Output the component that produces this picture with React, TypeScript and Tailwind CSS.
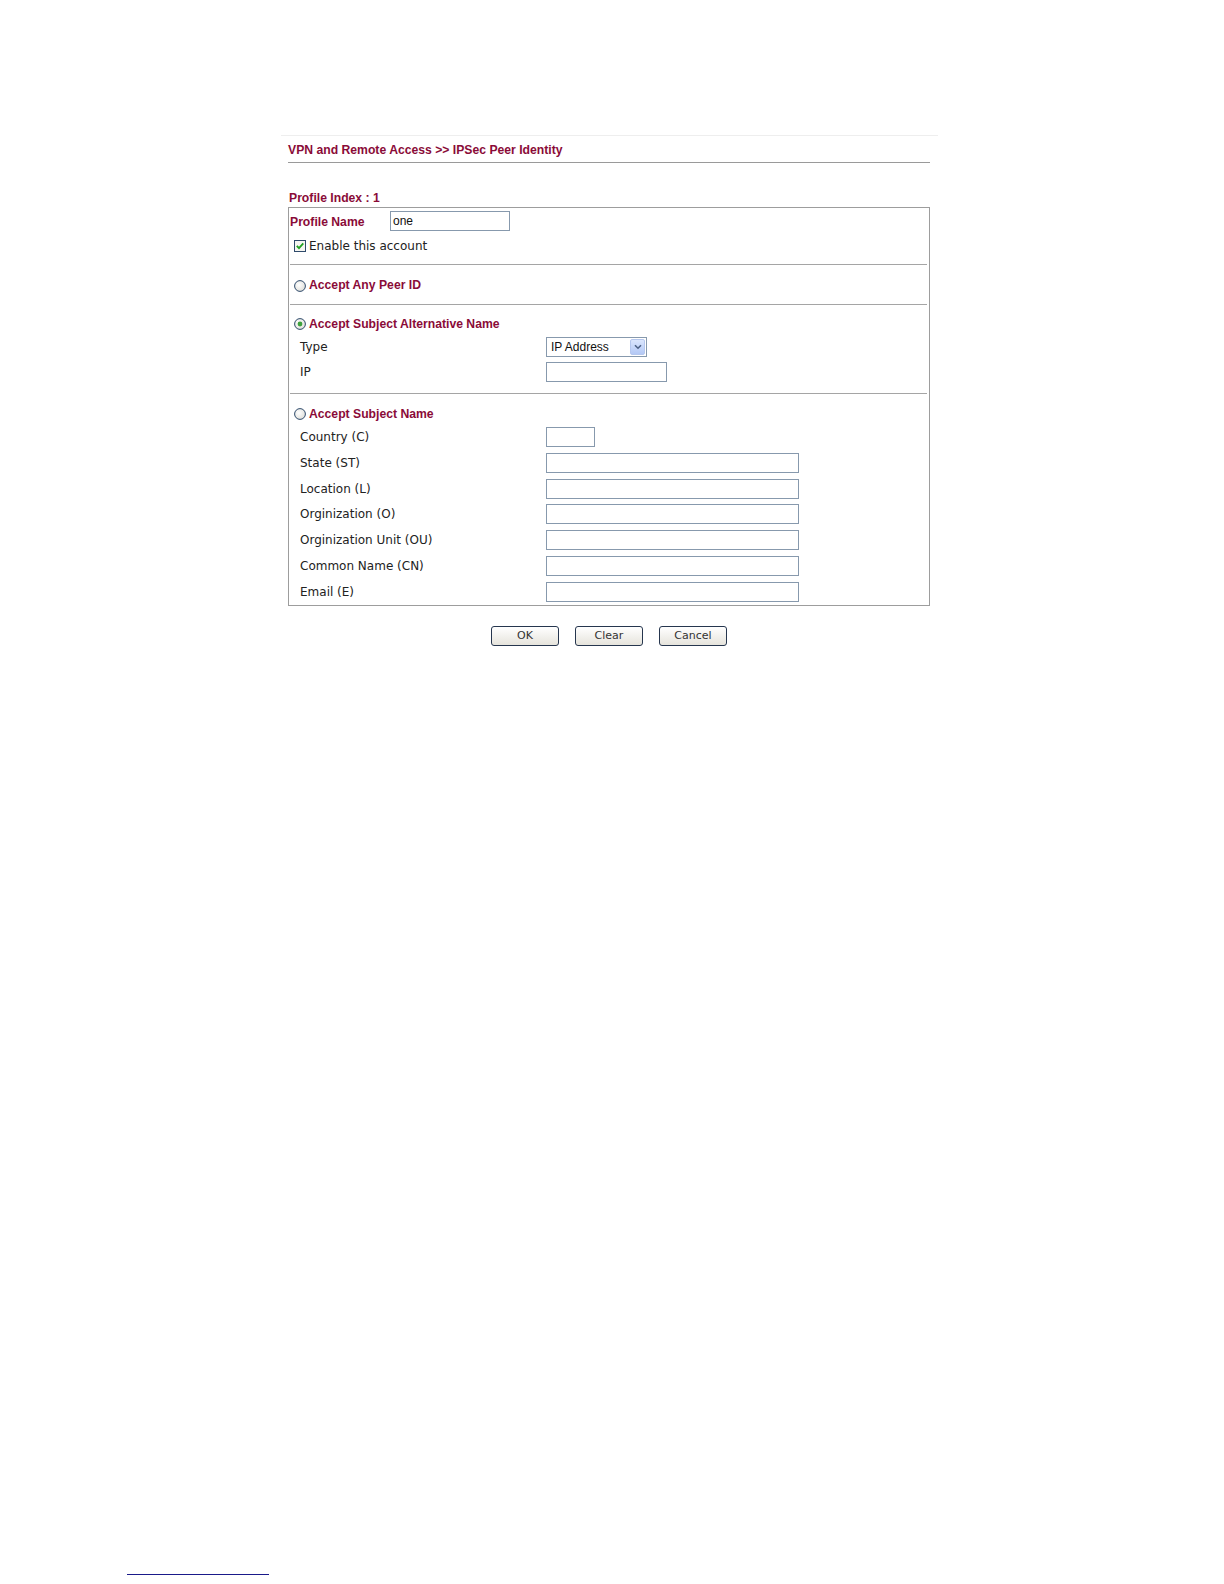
import React from "react";

const red = "text-[#8a0b38]";
const boldFont = "font-['Liberation_Sans',Arial,sans-serif] font-bold text-[12.2px]";
const regFont = "font-['DejaVu_Sans',Verdana,sans-serif] text-[12px] text-[#222]";
const arialFont = "font-['Liberation_Sans',Arial,sans-serif] text-[12px] text-[#111]";
const btnFont = "font-['DejaVu_Sans',Verdana,sans-serif] text-[11px] text-[#333]";

function Radio({ checked }: { checked?: boolean }) {
  return (
    <svg width="12" height="12" viewBox="0 0 12 12" className="shrink-0">
      <defs>
        <radialGradient id={checked ? "rg1" : "rg0"} cx="0.4" cy="0.4" r="0.7">
          <stop offset="0" stopColor="#ffffff" />
          <stop offset="1" stopColor="#dcdcd6" />
        </radialGradient>
      </defs>
      <circle cx="6" cy="6" r="5.4" fill={`url(#${checked ? "rg1" : "rg0"})`} stroke="#2f4a6b" strokeWidth="1" />
      {checked && <circle cx="6" cy="6" r="2.4" fill="#3da13d" />}
    </svg>
  );
}

function Checkbox() {
  return (
    <svg width="12" height="12" viewBox="0 0 12 12" className="shrink-0">
      <rect x="0.5" y="0.5" width="11" height="11" fill="#f6f6f2" stroke="#2f4a6b" />
      <path d="M2.8 5.8 L5 8.2 L9.3 3.3" fill="none" stroke="#21a121" strokeWidth="1.8" />
    </svg>
  );
}

function TextBox({ w, value }: { w: string; value?: string }) {
  return (
    <div className={`${w} h-[20px] border border-[#8799ad] bg-white flex items-center pl-[2px] ${arialFont}`}>
      {value}
    </div>
  );
}

function Row({ label, children, mt }: { label: string; children: React.ReactNode; mt: string }) {
  return (
    <div className={`flex items-center h-[20px] ${mt}`}>
      <div className={`w-[246px] whitespace-nowrap ${regFont}`}>{label}</div>
      {children}
    </div>
  );
}

function Btn({ label }: { label: string }) {
  return (
    <div
      className={`w-[68px] h-[20px] rounded-[3px] border border-[#26364e] bg-gradient-to-b from-white to-[#e6e4dc] flex items-center justify-center ${btnFont}`}
    >
      {label}
    </div>
  );
}

export default function App() {
  return (
    <div className="h-[1584px] w-full bg-white overflow-hidden">
      <div className="pt-[135px] pl-[281px]">
        <div className="w-[657px] h-px bg-[#eeeeee]" />
        <div className={`ml-[7px] w-[642px] h-[26px] pt-[2px] flex items-center ${boldFont} ${red}`}>
          VPN and Remote Access &gt;&gt; IPSec Peer Identity
        </div>
        <div className="ml-[7px] w-[642px] h-px bg-[#9a9a9a]" />
        <div className={`ml-[8px] mt-[25px] h-[19px] pt-[2px] flex items-center ${boldFont} ${red}`}>Profile Index : 1</div>

        <div className="ml-[7px] w-[642px] border border-[#9d9d9d]">
          {/* Section 1 */}
          <div className="pt-[3px] pb-[8px]">
            <div className="flex items-center h-[20px] pl-[1px]">
              <div className={`w-[100px] pt-[3px] ${boldFont} ${red}`}>Profile Name</div>
              <TextBox w="w-[120px]" value="one" />
            </div>
            <div className="flex items-center h-[20px] mt-[5px] pl-[5px] gap-[3px]">
              <Checkbox />
              <span className={regFont}>Enable this account</span>
            </div>
          </div>
          <div className="ml-[1px] mr-[2px] h-px bg-[#a5a5a5]" />

          {/* Section 2 */}
          <div className="h-[39px] pt-[2px] flex items-center pl-[5px] gap-[3px]">
            <Radio />
            <span className={`${boldFont} ${red}`}>Accept Any Peer ID</span>
          </div>
          <div className="ml-[1px] mr-[2px] h-px bg-[#a5a5a5]" />

          {/* Section 3 */}
          <div className="pt-[10px] pb-[11px]">
            <div className="h-[18px] flex items-center pl-[5px] gap-[3px]">
              <Radio checked />
              <span className={`${boldFont} ${red}`}>Accept Subject Alternative Name</span>
            </div>
            <div className="pl-[11px]">
              <Row label="Type" mt="mt-[4px]">
                <div className="w-[101px] h-[20px] border border-[#8799ad] bg-white flex items-center justify-between pl-[4px] pr-[1px]">
                  <span className={arialFont}>IP Address</span>
                  <div className="w-[15px] h-[16px] bg-gradient-to-b from-[#dbe6fd] to-[#b3c8f5] border border-[#b5c7ee] rounded-[2px] flex items-center justify-center">
                    <svg width="8" height="6" viewBox="0 0 8 6">
                      <path d="M1 1.2 L4 4.2 L7 1.2" fill="none" stroke="#4d6185" strokeWidth="1.6" />
                    </svg>
                  </div>
                </div>
              </Row>
              <Row label="IP" mt="mt-[5px]">
                <TextBox w="w-[121px]" />
              </Row>
            </div>
          </div>
          <div className="ml-[1px] mr-[2px] h-px bg-[#a5a5a5]" />

          {/* Section 4 */}
          <div className="pt-[11px] pb-[3px]">
            <div className="h-[18px] flex items-center pl-[5px] gap-[3px]">
              <Radio />
              <span className={`${boldFont} ${red}`}>Accept Subject Name</span>
            </div>
            <div className="pl-[11px]">
              <Row label="Country (C)" mt="mt-[4px]">
                <TextBox w="w-[49px]" />
              </Row>
              <Row label="State (ST)" mt="mt-[6px]">
                <TextBox w="w-[253px]" />
              </Row>
              <Row label="Location (L)" mt="mt-[6px]">
                <TextBox w="w-[253px]" />
              </Row>
              <Row label="Orginization (O)" mt="mt-[5px]">
                <TextBox w="w-[253px]" />
              </Row>
              <Row label="Orginization Unit (OU)" mt="mt-[6px]">
                <TextBox w="w-[253px]" />
              </Row>
              <Row label="Common Name (CN)" mt="mt-[6px]">
                <TextBox w="w-[253px]" />
              </Row>
              <Row label="Email (E)" mt="mt-[6px]">
                <TextBox w="w-[253px]" />
              </Row>
            </div>
          </div>
        </div>

        <div className="ml-[7px] w-[642px] mt-[20px] flex justify-center gap-[16px]">
          <Btn label="OK" />
          <Btn label="Clear" />
          <Btn label="Cancel" />
        </div>
      </div>

      <div className="mt-[928px] ml-[127px] w-[142px] h-px bg-[#1a1a8a]" />
    </div>
  );
}
